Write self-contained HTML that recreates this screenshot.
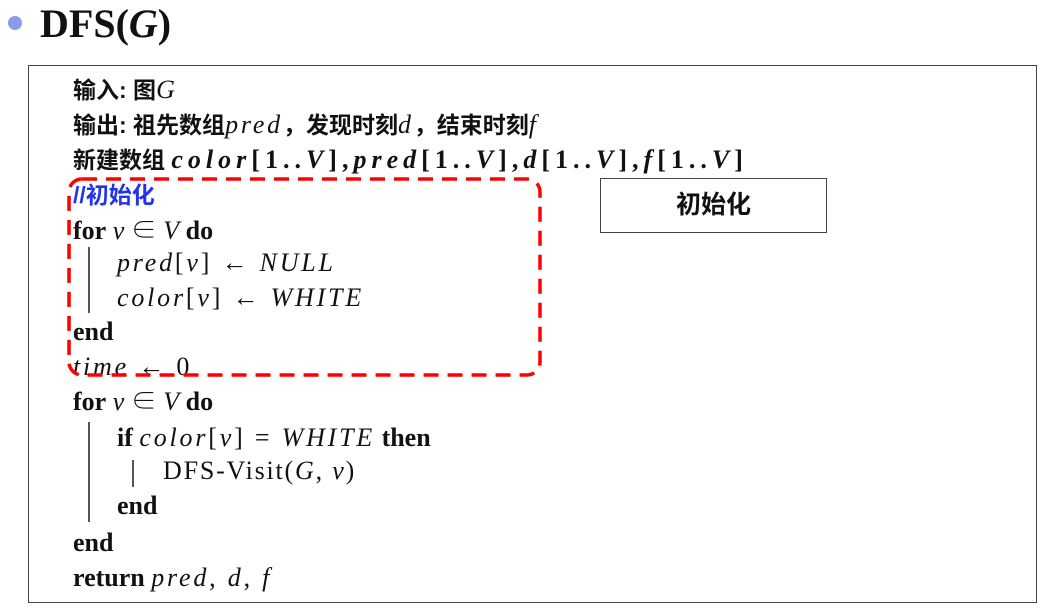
<!DOCTYPE html>
<html><head><meta charset="utf-8"><style>
body{margin:0;width:1044px;height:610px;background:#fff;overflow:hidden;position:relative;font-family:"Liberation Serif","Noto Serif CJK SC",serif;color:#111}
.l{position:absolute;font-size:26px;white-space:nowrap;line-height:30px}
.cn{font-family:"Liberation Sans","Noto Sans CJK SC",sans-serif;font-weight:bold;font-size:23px;letter-spacing:0}
i{font-style:italic}
.m{letter-spacing:2.8px}
.mb{letter-spacing:5px;font-weight:bold}
.bar{position:absolute;width:1.5px;background:#555}
</style></head><body>
<div style="position:absolute;left:8px;top:16px;width:14px;height:14px;border-radius:50%;background:#8a9be8"></div>
<div style="position:absolute;left:40px;top:1px;font-size:40px;font-weight:bold;line-height:46px">DFS(<i>G</i>)</div>
<div style="position:absolute;left:28px;top:65px;width:1009px;height:538px;border:1.5px solid #444;box-sizing:border-box"></div>
<div class="l" style="left:73px;top:75px"><span class="cn">输入: 图</span><i class="m">G</i></div>
<div class="l" style="left:73px;top:110px"><span class="cn">输出: 祖先数组</span><i class="m">pred</i><span class="cn">，发现时刻</span><i class="m">d</i><span class="cn">，结束时刻</span><i class="m">f</i></div>
<div class="l" style="left:73px;top:145px"><span class="cn">新建数组 </span><span class="mb"><i>color</i>[1..<i>V</i>],<i>pred</i>[1..<i>V</i>],<i>d</i>[1..<i>V</i>],<i>f</i>[1..<i>V</i>]</span></div>
<div class="l" style="left:73px;top:180px"><span class="cn" style="color:#2233ee">//初始化</span></div>
<div class="l" style="left:73px;top:216px"><b>for</b> <i>v</i> ∈ <i>V</i> <b>do</b></div>
<div class="bar" style="left:88px;top:247px;height:66px"></div>
<div class="l m" style="left:117px;top:248px"><i>pred</i>[<i>v</i>] ← <i>NULL</i></div>
<div class="l m" style="left:117px;top:283px"><i>color</i>[<i>v</i>] ← <i>WHITE</i></div>
<div class="l" style="left:73px;top:317px"><b>end</b></div>
<div class="l m" style="left:73px;top:352px"><i>time</i> ← 0</div>
<div class="l" style="left:73px;top:387px"><b>for</b> <i>v</i> ∈ <i>V</i> <b>do</b></div>
<div class="bar" style="left:88px;top:422px;height:100px"></div>
<div class="l" style="left:117px;top:423px"><b>if</b> <span class="m"><i>color</i>[<i>v</i>] = <i>WHITE</i></span> <b>then</b></div>
<div class="bar" style="left:132px;top:460px;height:27px"></div>
<div class="l" style="left:163px;top:456px;letter-spacing:1.8px">DFS-Visit(<i>G</i>, <i>v</i>)</div>
<div class="l" style="left:117px;top:491px"><b>end</b></div>
<div class="l" style="left:73px;top:528px"><b>end</b></div>
<div class="l" style="left:73px;top:563px"><b>return</b> <span class="m"><i>pred</i>, <i>d</i>, <i>f</i></span></div>
<svg style="position:absolute;left:0;top:0" width="1044" height="610"><rect x="69" y="179" width="471" height="196" rx="13" fill="none" stroke="#f00" stroke-width="3.5" stroke-dasharray="15 9"/></svg>
<div style="position:absolute;left:600px;top:178px;width:227px;height:55px;border:1.5px solid #444;box-sizing:border-box;text-align:center;line-height:52px;font-family:'Liberation Sans','Noto Sans CJK SC',sans-serif;font-weight:bold;font-size:25px">初始化</div>
</body></html>
